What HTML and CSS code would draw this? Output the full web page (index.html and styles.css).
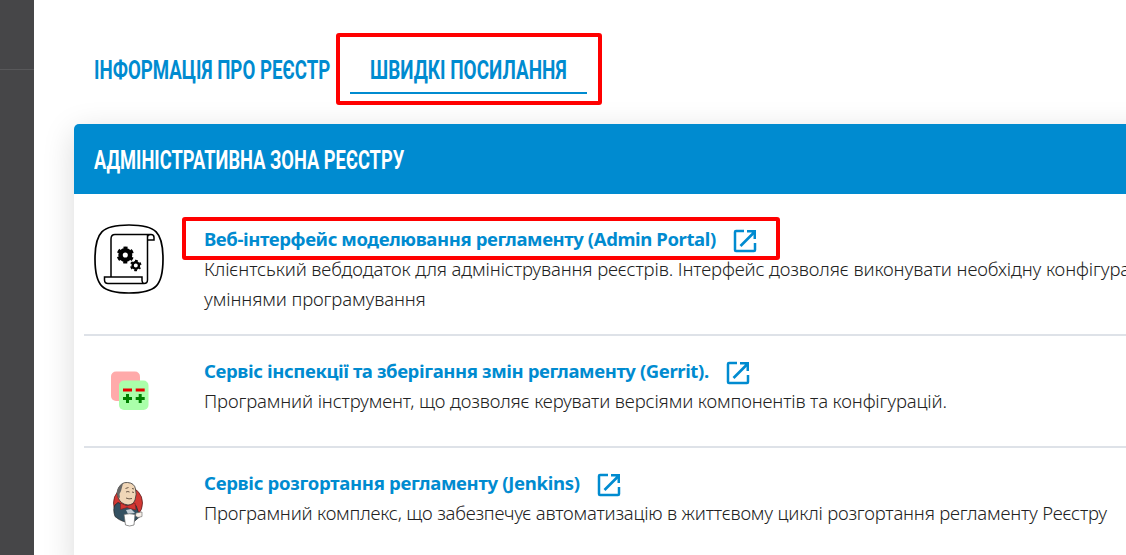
FILE: index.html
```html
<!DOCTYPE html>
<html lang="uk">
<head>
<meta charset="utf-8">
<title>Швидкі посилання</title>
<link rel="stylesheet" href="styles.css">
</head>
<body>
<svg class="defs" width="0" height="0">
  <symbol id="external" viewBox="0 0 24 24">
    <path d="M11 2H3a1 1 0 0 0-1 1v18a1 1 0 0 0 1 1h18a1 1 0 0 0 1-1v-7" fill="none" stroke="currentColor" stroke-width="2.5"/>
    <path d="M7.500 17L21 3.500" fill="none" stroke="currentColor" stroke-width="2.600"/>
    <path d="M14 1h9v9h-2.500V5.500L18.500 3.500H14z" fill="currentColor"/>
  </symbol>
</svg>
<div class="app">
  <aside class="sidebar"></aside>
  <main class="content">
    <nav class="tabs">
      <a class="tab"><span class="caps tab-info">ІНФОРМАЦІЯ ПРО РЕЄСТР</span></a>
      <a class="tab tab-active"><span class="caps tab-links">ШВИДКІ ПОСИЛАННЯ</span><i class="mark mark-tab"></i></a>
    </nav>
    <section class="card">
      <header class="card-head"><h2 class="caps card-title">АДМІНІСТРАТИВНА ЗОНА РЕЄСТРУ</h2></header>
      <ul class="list">
        <li class="item">
          <svg class="icon" viewBox="0 0 70 70" fill="none" stroke="#000" stroke-width="1.5">
            <path d="M35 1C62 1 69 8 69 35S62 69 35 69 1 62 1 35 8 1 35 1z" stroke-width="1.700"/>
            <path d="M17 53V15q0-4.500 4-4.500h36M53.500 10.500V56q0 3.500-3.500 3.500M57 10.500q3 0 3 3V16h-6.500v-2.500q0-3 3.500-3M17 59.500h32.500q-1.500-1.500-1.500-3V53H10.500v3q0 3.500 3.500 3.500h4"/>
            <circle cx="31.300" cy="31" r="4.800" stroke-width="4.500"/>
            <circle cx="31.300" cy="31" r="7.200" stroke-width="2.800" stroke-dasharray="3.770 3.770" stroke-dashoffset="1.900" transform="rotate(30 31.300 31)"/>
            <circle cx="41.800" cy="41.500" r="3.200" stroke-width="2.400"/>
            <circle cx="41.800" cy="41.500" r="4.800" stroke-width="1.900" stroke-dasharray="2.513 2.513" stroke-dashoffset="1.250" transform="rotate(30 41.800 41.500)"/>
          </svg>
          <div class="body">
            <h3 class="title"><a class="link t1">Веб-інтерфейс моделювання регламенту (Admin Portal)</a><svg class="ext"><use href="#external"/></svg><i class="mark mark-link"></i></h3>
            <p class="desc d1">Клієнтський вебдодаток для адміністрування реєстрів. Інтерфейс дозволяє виконувати необхідну конфігура<br>уміннями програмування</p>
          </div>
        </li>
        <li class="item">
          <svg class="icon" viewBox="0 0 70 70">
            <rect x="17" y="15.500" width="29" height="29.500" rx="5" fill="#faa"/>
            <rect x="25" y="24.500" width="29.500" height="29.500" rx="5" fill="#afa"/>
            <path d="M29 34h9M41.700 34h9" stroke="#e60000" stroke-width="3"/>
            <path d="M29 42.600h9M41.700 42.600h9M33.500 38.100v9M46.200 38.100v9" stroke="#008000" stroke-width="3"/>
          </svg>
          <div class="body">
            <h3 class="title"><a class="link t2">Сервіс інспекції та зберігання змін регламенту (Gerrit).</a><svg class="ext"><use href="#external"/></svg></h3>
            <p class="desc d2">Програмний інструмент, що дозволяє керувати версіями компонентів та конфігурацій.</p>
          </div>
        </li>
        <li class="item">
          <svg class="icon" viewBox="0 0 70 70">
            <ellipse cx="34" cy="35" rx="14.500" ry="16" fill="#d33833" stroke="#5c2020" stroke-width=".8"/>
            <path d="M21 37Q18.500 41 21 48.500q8 7 18 6l7-6-4-11-7-3-4 3-7-3z" fill="#335061" stroke="#222" stroke-width=".7"/>
            <path d="M24.500 20q3-6 9-5.500 7 .5 8 6.500 1.500 5-.5 11-2 5-7 5-8-1-10-8-2-5 .5-9z" fill="#f0d6b7" stroke="#333" stroke-width=".8"/>
            <path d="M29 15.500q-5.500 2.500-6 8.500l1 5 2 1-.5-4 1.500-3z" fill="#666"/>
            <path d="M31.500 20.500l3-1m3.500 1 2 .5M32 24q2-1 3.500 0m2.500 0 2 .5M32 30q3 1.500 6 .5" fill="none" stroke="#5a4a3c" stroke-width=".9"/>
            <path d="M33 38l-6.500-3v6.500l6.500-2 3 1 6 1.500-1-7-5 2z" fill="#d33833" stroke="#7c1c1c" stroke-width=".6"/>
            <path d="M32 42l5-1 4 4-7 1z" fill="#c3ced6"/>
            <path d="M30 46.500q5.500-1.500 11 0L40 57q-4.500 2-8.500 0z" fill="#fff" stroke="#666" stroke-width=".7"/>
            <path d="M41.500 48l.5-3 6-1v4.500l-4 1z" fill="#f5eee7" stroke="#666" stroke-width=".6"/>
          </svg>
          <div class="body">
            <h3 class="title"><a class="link t3">Сервіс розгортання регламенту (Jenkins)</a><svg class="ext"><use href="#external"/></svg></h3>
            <p class="desc d3">Програмний комплекс, що забезпечує автоматизацію в життєвому циклі розгортання регламенту Реєстру</p>
          </div>
        </li>
      </ul>
    </section>
  </main>
</div>
</body>
</html>
```
FILE: styles.css
```css
* { box-sizing: border-box; }
body { margin: 0; background: #fff; overflow: hidden; font-family: "Noto Sans", sans-serif; }
h2, h3, p, ul { margin: 0; padding: 0; }
.defs { display: block; height: 0; }
.app { display: flex; width: 1126px; height: 555px; overflow: hidden; }
.sidebar { flex: 0 0 34px; background: linear-gradient(#58585a, #58585a) 0 69px / 100% 1px no-repeat #464648; }
.content { flex: 1; min-width: 0; padding: 46px 0 0 40px; }
.tabs { display: flex; height: 48px; margin-bottom: 30px; }
.tab { display: flex; align-items: center; width: 276px; padding-left: 20px; color: #008bd0; }
.tab-active { position: relative; width: 237px; padding-top: 2px; border-bottom: 2px solid #008bd0; }
.caps { display: block; white-space: nowrap; font: 700 26px/46px Roboto, sans-serif; transform-origin: 0 50%; }
.tab-info { transform: scaleX(.718); }
.tab-links { transform: scaleX(.728); }
.card { width: 1200px; background: #fff; border-radius: 5px; box-shadow: 0 8px 32px rgba(0, 0, 0, .15); }
.card-head { display: flex; align-items: center; height: 70px; padding: 2px 20px 0; background: #008bd0; color: #fff; border-radius: 5px 5px 0 0; }
.card-title { transform: scaleX(.7035); }
.list { list-style: none; padding: 10px; }
.item { display: flex; gap: 40px; padding: 20px 10px; border-bottom: 2px solid #dee2e8; }
.icon { flex: 0 0 70px; width: 70px; height: 70px; }
.body { flex: 1; white-space: nowrap; }
.title { position: relative; display: flex; align-items: center; gap: 17px; height: 30px; font-size: 18.5px; line-height: 30px; font-weight: 700; color: #008bd0; }
.t1 { letter-spacing: -.39px; }
.t2 { letter-spacing: -.39px; }
.t3 { letter-spacing: -.3px; }
.ext { width: 24px; height: 24px; margin-top: 4px; }
.desc { font-size: 18.5px; line-height: 30px; font-weight: 300; color: #222; }
.d1 { letter-spacing: -.12px; }
.d2 { letter-spacing: -.14px; }
.d3 { letter-spacing: -.2px; }
.mark { position: absolute; border: 4px solid #f00; border-radius: 3px; }
.mark-tab { left: -14px; top: -13.500px; width: 266px; height: 72px; }
.mark-link { left: -22px; top: -7px; width: 598px; height: 43px; }
```
